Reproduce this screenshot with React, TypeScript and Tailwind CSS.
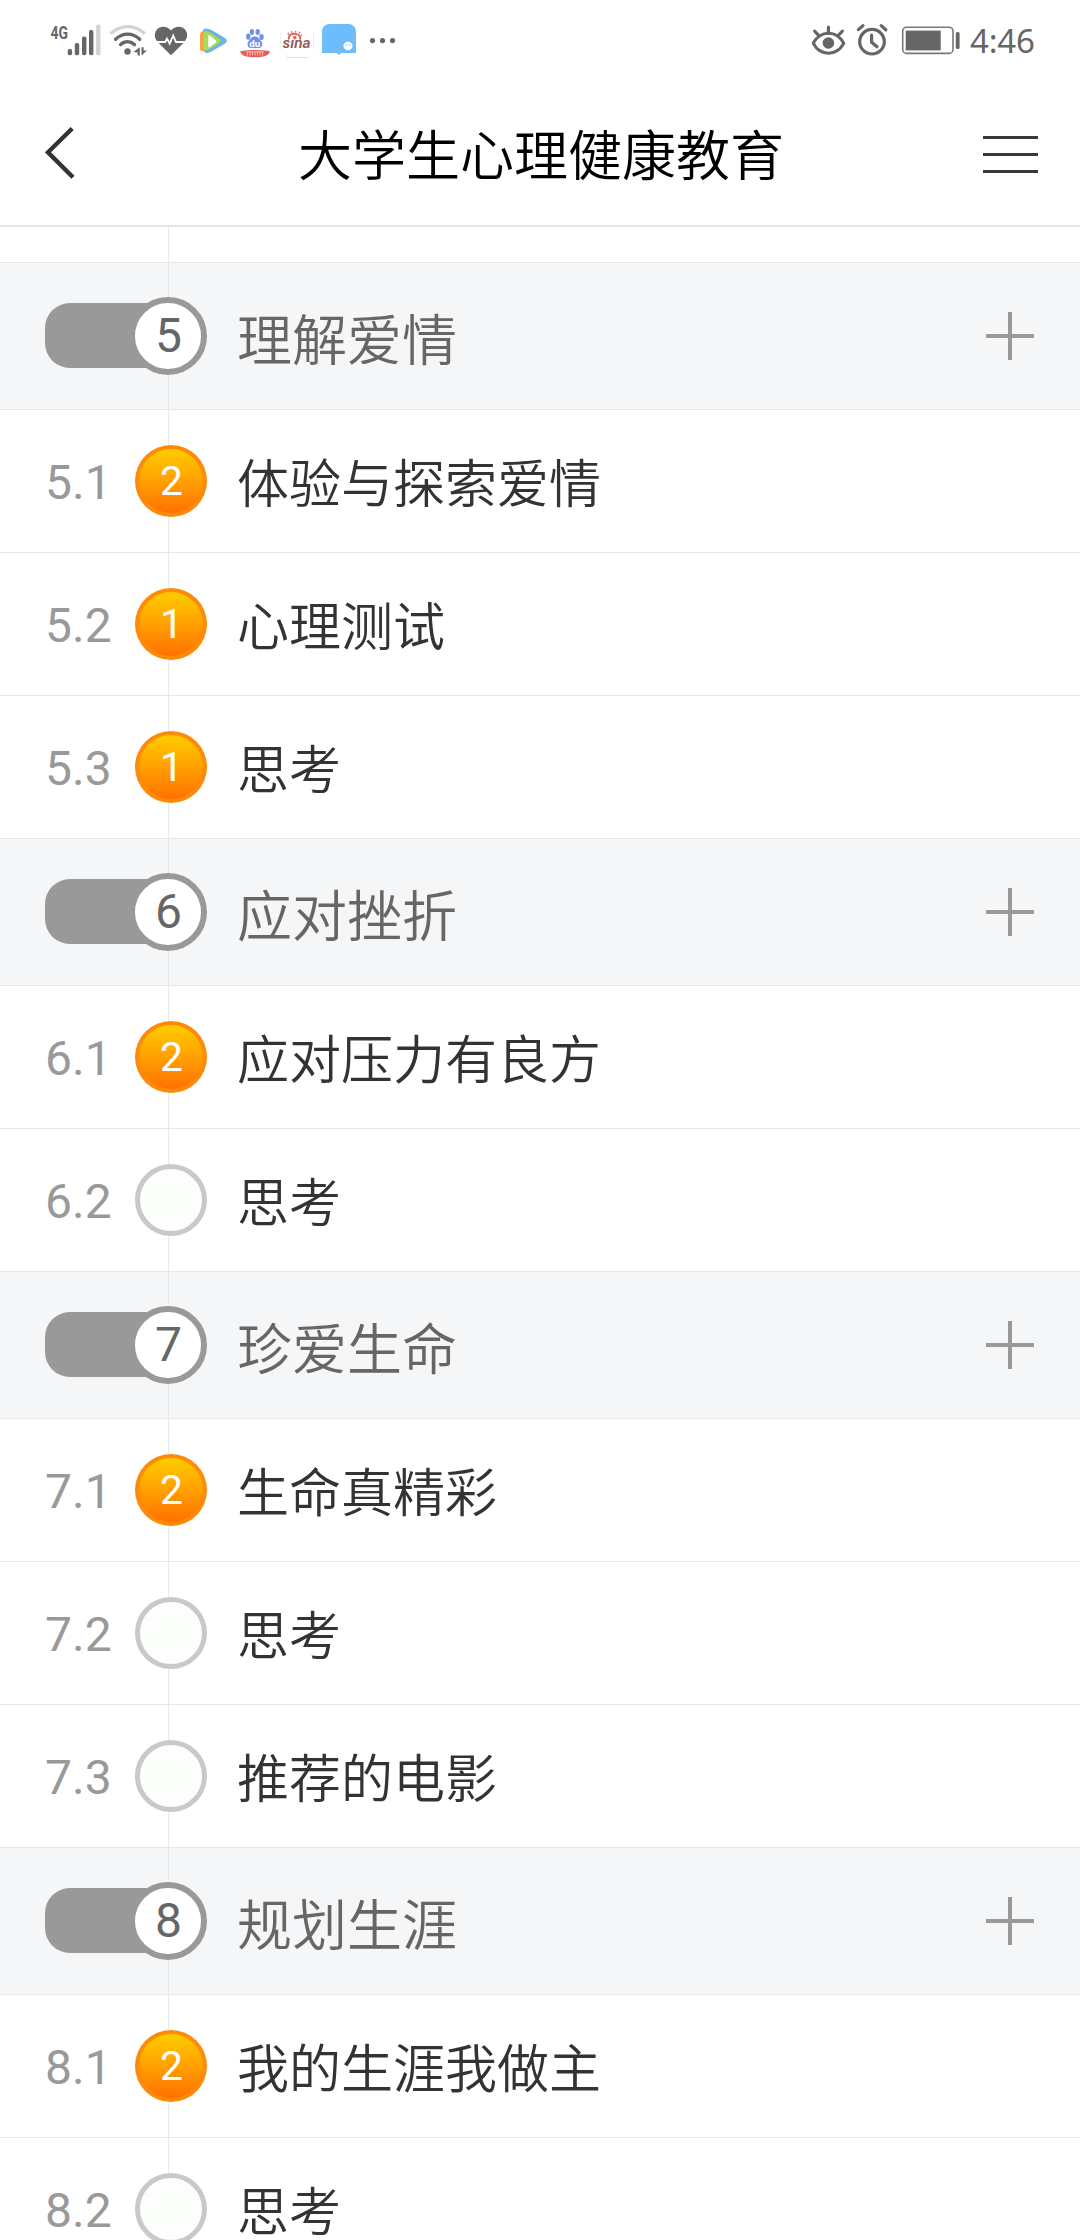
import React from "react";

type Lesson = { no: string; title: string; badge?: number };
type Chapter = { no: number; title: string; lessons: Lesson[] };

const chapters: Chapter[] = [
  {
    no: 5,
    title: "理解爱情",
    lessons: [
      { no: "5.1", title: "体验与探索爱情", badge: 2 },
      { no: "5.2", title: "心理测试", badge: 1 },
      { no: "5.3", title: "思考", badge: 1 },
    ],
  },
  {
    no: 6,
    title: "应对挫折",
    lessons: [
      { no: "6.1", title: "应对压力有良方", badge: 2 },
      { no: "6.2", title: "思考" },
    ],
  },
  {
    no: 7,
    title: "珍爱生命",
    lessons: [
      { no: "7.1", title: "生命真精彩", badge: 2 },
      { no: "7.2", title: "思考" },
      { no: "7.3", title: "推荐的电影" },
    ],
  },
  {
    no: 8,
    title: "规划生涯",
    lessons: [
      { no: "8.1", title: "我的生涯我做主", badge: 2 },
      { no: "8.2", title: "思考" },
    ],
  },
];

function SignalIcon() {
  return (
    <svg width="58" height="80" viewBox="48 0 58 80" className="shrink-0">
      <text x="50.5" y="38.5" fontSize="18.5" fontWeight="700" fill="#666" textLength="17.5" lengthAdjust="spacingAndGlyphs" fontFamily="Roboto, sans-serif">4G</text>
      <g fill="#666">
        <rect x="67.7" y="49" width="4.4" height="6.3" rx="1.8" />
        <rect x="74.8" y="43" width="4.4" height="12.3" rx="1.8" />
        <rect x="82" y="36.5" width="4.4" height="18.8" rx="1.8" />
        <rect x="89" y="30" width="4.4" height="25.3" rx="1.8" />
      </g>
      <rect x="96.1" y="24.5" width="4.4" height="30.8" rx="1.6" fill="#d3d3d3" />
    </svg>
  );
}

function WifiIcon() {
  return (
    <svg width="45" height="80" viewBox="106 0 45 80" className="shrink-0" fill="none">
      <path d="M110.6 33.8C120.5 24.2 134.8 24.2 144.9 33.8" stroke="#d3d3d3" strokeWidth="3.4" />
      <path d="M115.6 39.2C122.7 32.4 132.6 32.4 139.7 39.2" stroke="#666" strokeWidth="3.4" strokeLinecap="round" />
      <path d="M120.6 44.6C124.7 40.8 130.2 40.8 134.5 44.6" stroke="#666" strokeWidth="3.4" strokeLinecap="round" />
      <circle cx="127.5" cy="51.5" r="3.2" fill="#666" />
      <path d="M139.8 47.3V55.6H137.6V52.6L133.4 52L139.8 47.3ZM141.5 47.3V55.6L147 50.4H143.6V47.3Z" fill="#666" />
    </svg>
  );
}

function HeartIcon() {
  return (
    <svg width="42" height="80" viewBox="151 0 42 80" className="shrink-0" fill="none">
      <path d="M171 55.3L159.3 43.8C155.6 40 154 36.8 155.3 32.6C157.4 25.7 166.5 24.6 171 30.5C175.5 24.6 184.6 25.7 186.7 32.6C188 36.8 186.4 40 182.7 43.8Z" fill="#666" />
      <path d="M155 42H165.2L167 38.6L169.7 43.6L173.2 35.6L176 42H187" stroke="#fff" strokeWidth="1.8" />
    </svg>
  );
}

function VideoIcon() {
  return (
    <svg width="43" height="80" viewBox="193 0 43 80" className="shrink-0">
      <path d="M206.5 28.6C203.5 28.6 202.6 30 202.6 33L204 51C205 54 208.5 53 211.5 51.5L225 43.5C227.4 41.8 227.4 39.6 225 38L211 29.8Z" fill="#67b4ee" />
      <path d="M203.5 31C200.8 31.2 200 33 200 36V48C200 51.6 202 52 205 50.5L211 47V33.5Z" fill="#f8a24b" />
      <path d="M206 31.2C203.8 31.2 203.4 33 203.4 35V47.5C203.8 50.8 206 51.2 208.8 49.5L219 43.4C221.2 41.8 221.2 39.8 219 38.4L209.5 32Z" fill="#a5db55" />
      <path d="M208.2 36.2V46.2C208.2 47.4 209.2 47.6 210.2 47L215.6 42.8C216.6 41.9 216.6 41 215.6 40.2L210.2 35.7C209 35 208.2 35.2 208.2 36.2Z" fill="#fff" />
    </svg>
  );
}

function BaiduIcon() {
  return (
    <svg width="40" height="80" viewBox="236 0 40 80" className="shrink-0">
      <g fill="#6e93e6">
        <ellipse cx="248.3" cy="36.7" rx="2.2" ry="3.1" />
        <ellipse cx="251.9" cy="32" rx="2.2" ry="2.9" />
        <ellipse cx="257.7" cy="32" rx="2.2" ry="2.9" />
        <ellipse cx="261.5" cy="37" rx="2.2" ry="3.1" />
        <path d="M254.8 36.6C257.8 36.6 258.8 38.8 260.6 40.6C263.2 43.2 262.9 48 258.6 48H251C246.8 48 246.6 43.2 249.2 40.6C251 38.8 251.8 36.6 254.8 36.6Z" />
      </g>
      <text x="249.2" y="46.5" fontSize="8.5" fontWeight="700" fill="#fff" textLength="11" lengthAdjust="spacingAndGlyphs" fontFamily="Roboto, sans-serif">du</text>
      <path d="M240.2 51C243 51 246 50 255 50S267 51 269.8 51C269.6 54.5 266 57.3 255 57.3S240.6 54.5 240.2 51Z" fill="#e8605c" />
      <path d="M246.5 51.8H263.8M247.5 51.8V55.4M250 51.8V55.4M252.5 51.8V55.4M255 51.8V55.4M257.5 51.8V55.4M260 51.8V55.4M262.5 51.8V55.4" stroke="#f7cfce" strokeWidth=".8" />
    </svg>
  );
}

function SinaIcon() {
  return (
    <svg width="43" height="80" viewBox="276 0 43 80" className="shrink-0" fill="none">
      <path d="M280.7 31V50M313.5 31V50" stroke="#f1f1f1" strokeWidth="1" />
      <path d="M286.5 57.4H308" stroke="#dedede" strokeWidth="1" />
      <path d="M289 39.5C288 34.6 292.5 33.4 296 34C300 34.6 301 37.4 299.6 39.6" stroke="#e4665c" strokeWidth="2" />
      <circle cx="294.8" cy="37.6" r="1.8" fill="#e4665c" />
      <path d="M288.8 34.6L287.8 33M292 32.8L291.4 31.2M295.6 32.4V31M299 33.2L300 32M301 35.6L302 35" stroke="#e4665c" strokeWidth="1.5" />
      <text x="282.5" y="48.4" fontSize="14" fontWeight="600" fontStyle="italic" fill="#8d5c5a" textLength="28" lengthAdjust="spacingAndGlyphs" fontFamily="Roboto, sans-serif">sına</text>
    </svg>
  );
}

function ChatIcon() {
  return (
    <svg width="46" height="80" viewBox="319 0 46 80" className="shrink-0">
      <path d="M329 24H349C353 24 356 28 356 31.5V53H341L339.2 55L336.8 53H322V31.5C322 28 325 24 329 24Z" fill="#6dbcfc" />
      <ellipse cx="348" cy="46" rx="4.6" ry="4.2" fill="#f6fbff" />
      <circle cx="346.3" cy="45.1" r=".7" fill="#6dbcfc" />
      <circle cx="349.6" cy="45.1" r=".7" fill="#6dbcfc" />
    </svg>
  );
}

function MoreIcon() {
  return (
    <svg width="40" height="80" viewBox="365 0 40 80" className="shrink-0" fill="#666">
      <circle cx="372.5" cy="40.6" r="2.6" />
      <circle cx="382.5" cy="40.6" r="2.6" />
      <circle cx="392.5" cy="40.6" r="2.6" />
    </svg>
  );
}

function EyeIcon() {
  return (
    <svg width="43" height="80" viewBox="808 0 43 80" className="shrink-0" fill="none">
      <path d="M813.2 43.3C820.5 30 836.5 30 843.8 43.3C836.5 56.6 820.5 56.6 813.2 43.3Z" stroke="#666" strokeWidth="3" strokeLinejoin="round" />
      <circle cx="828.4" cy="43" r="5.8" fill="#666" />
      <path d="M828.4 33V27.2M818.4 35.2L814.6 31.2M838.6 35.2L842.4 31.2" stroke="#666" strokeWidth="3.2" strokeLinecap="round" />
    </svg>
  );
}

function AlarmIcon() {
  return (
    <svg width="46" height="80" viewBox="851 0 46 80" className="shrink-0" fill="none" stroke="#666">
      <circle cx="872" cy="41.7" r="12.3" strokeWidth="3.2" />
      <path d="M871.6 35.2V42.2L877 46.8" strokeWidth="3.2" strokeLinecap="round" strokeLinejoin="round" />
      <path d="M858.4 29.6L863 25.6M881.2 25.6L885.8 29.8" strokeWidth="3.2" strokeLinecap="round" />
    </svg>
  );
}

function BatteryIcon() {
  return (
    <svg width="73" height="80" viewBox="897 0 73 80" className="shrink-0" fill="none">
      <rect x="902.7" y="27.2" width="50.3" height="26.2" rx="4" stroke="#777" strokeWidth="1.6" />
      <rect x="905.7" y="30.6" width="35" height="19.8" fill="#666" />
      <rect x="955.8" y="32" width="3.8" height="17" rx="1.5" fill="#666" />
    </svg>
  );
}

function StatusBar() {
  return (
    <div className="flex h-20 shrink-0 items-center justify-between pl-12">
      <div className="flex">
        <SignalIcon />
        <WifiIcon />
        <HeartIcon />
        <VideoIcon />
        <BaiduIcon />
        <SinaIcon />
        <ChatIcon />
        <MoreIcon />
      </div>
      <div className="flex w-[272px] items-center">
        <EyeIcon />
        <AlarmIcon />
        <BatteryIcon />
        <span className="pt-px font-['Noto_Sans'] text-[33px] leading-[80px] font-[370] tracking-[-0.2px] text-[#666]">4:46</span>
      </div>
    </div>
  );
}

function Header() {
  return (
    <header className="flex h-[147px] shrink-0 items-center justify-between border-b-2 border-[#e3e4e4] pr-[42px] pl-[45px]">
      <button aria-label="返回">
        <svg width="54" height="60" viewBox="0 0 54 60" fill="none">
          <path d="M27.2 5.5L3 29.3L28 54.3" stroke="#333" strokeWidth="4.4" />
        </svg>
      </button>
      <h1 className="text-[54px] leading-[80px] font-[350] text-black">大学生心理健康教育</h1>
      <button aria-label="菜单" className="flex flex-col gap-[14px] pt-[3px]">
        <span className="h-[3px] w-[55px] bg-[#3a3a3a]" />
        <span className="h-[3px] w-[55px] bg-[#3a3a3a]" />
        <span className="h-[3px] w-[55px] bg-[#3a3a3a]" />
      </button>
    </header>
  );
}

function ChapterRow({ no, title }: { no: number; title: string }) {
  return (
    <div className="flex h-[147px] items-center border-b border-[#e8e9ea] bg-[#f4f6f8] pr-[46px] pl-[45px]">
      <div className="relative z-10 mb-px flex h-[65px] w-[162px] items-center">
        <div className="h-[65px] flex-1 rounded-l-[25px] bg-[#999]" />
        <div className="-ml-[34px] flex size-[78px] shrink-0 items-center justify-center rounded-full border-[6px] border-[#999] bg-white pt-px pl-px font-['Roboto'] text-5xl font-normal text-[#666]">
          {no}
        </div>
      </div>
      <span className="ml-[30px] flex-1 pb-px text-[55px] leading-[80px] text-[#666]">{title}</span>
      <svg width="48" height="48" viewBox="0 0 48 48" className="shrink-0">
        <path d="M0 24H48M24 0V48" stroke="#999" strokeWidth="4" />
      </svg>
    </div>
  );
}

function LessonRow({ no, title, badge }: Lesson) {
  return (
    <div className="flex h-[143px] items-center border-b border-[#e8e9ea] pl-[45px]">
      <span className="w-[90px] pt-[3px] font-['Roboto'] text-5xl font-normal text-[#999]">{no}</span>
      {badge ? (
        <div className="relative z-10 flex size-[72px] items-center justify-center rounded-full bg-[#ff8a0a] font-['Roboto'] text-[41px] font-normal text-white">
          <div className="flex size-16 items-center justify-center rounded-full bg-linear-to-b from-[#ffcc00] to-[#ff7000] pt-px pl-px">{badge}</div>
        </div>
      ) : (
        <div className="relative z-10 size-[72px] rounded-full border-[5px] border-[#c9c9c9] bg-[#fcfefc]" />
      )}
      <span className="ml-[30px] text-[52px] leading-[80px] text-[#333]">{title}</span>
    </div>
  );
}

export default function App() {
  return (
    <div className="flex h-[2240px] w-[1080px] flex-col overflow-hidden bg-white font-['Noto_Sans_CJK_SC',sans-serif] font-[350]">
      <StatusBar />
      <Header />
      <main className="relative flex-1 overflow-hidden">
        <div className="h-9 border-b border-[#e8e9ea]" />
        {chapters.map((c) => (
          <section key={c.no}>
            <ChapterRow no={c.no} title={c.title} />
            {c.lessons.map((l) => (
              <LessonRow key={l.no} {...l} />
            ))}
          </section>
        ))}
        <div className="absolute top-0 bottom-0 left-[168px] w-px bg-[#e8e9ea]" />
      </main>
    </div>
  );
}
